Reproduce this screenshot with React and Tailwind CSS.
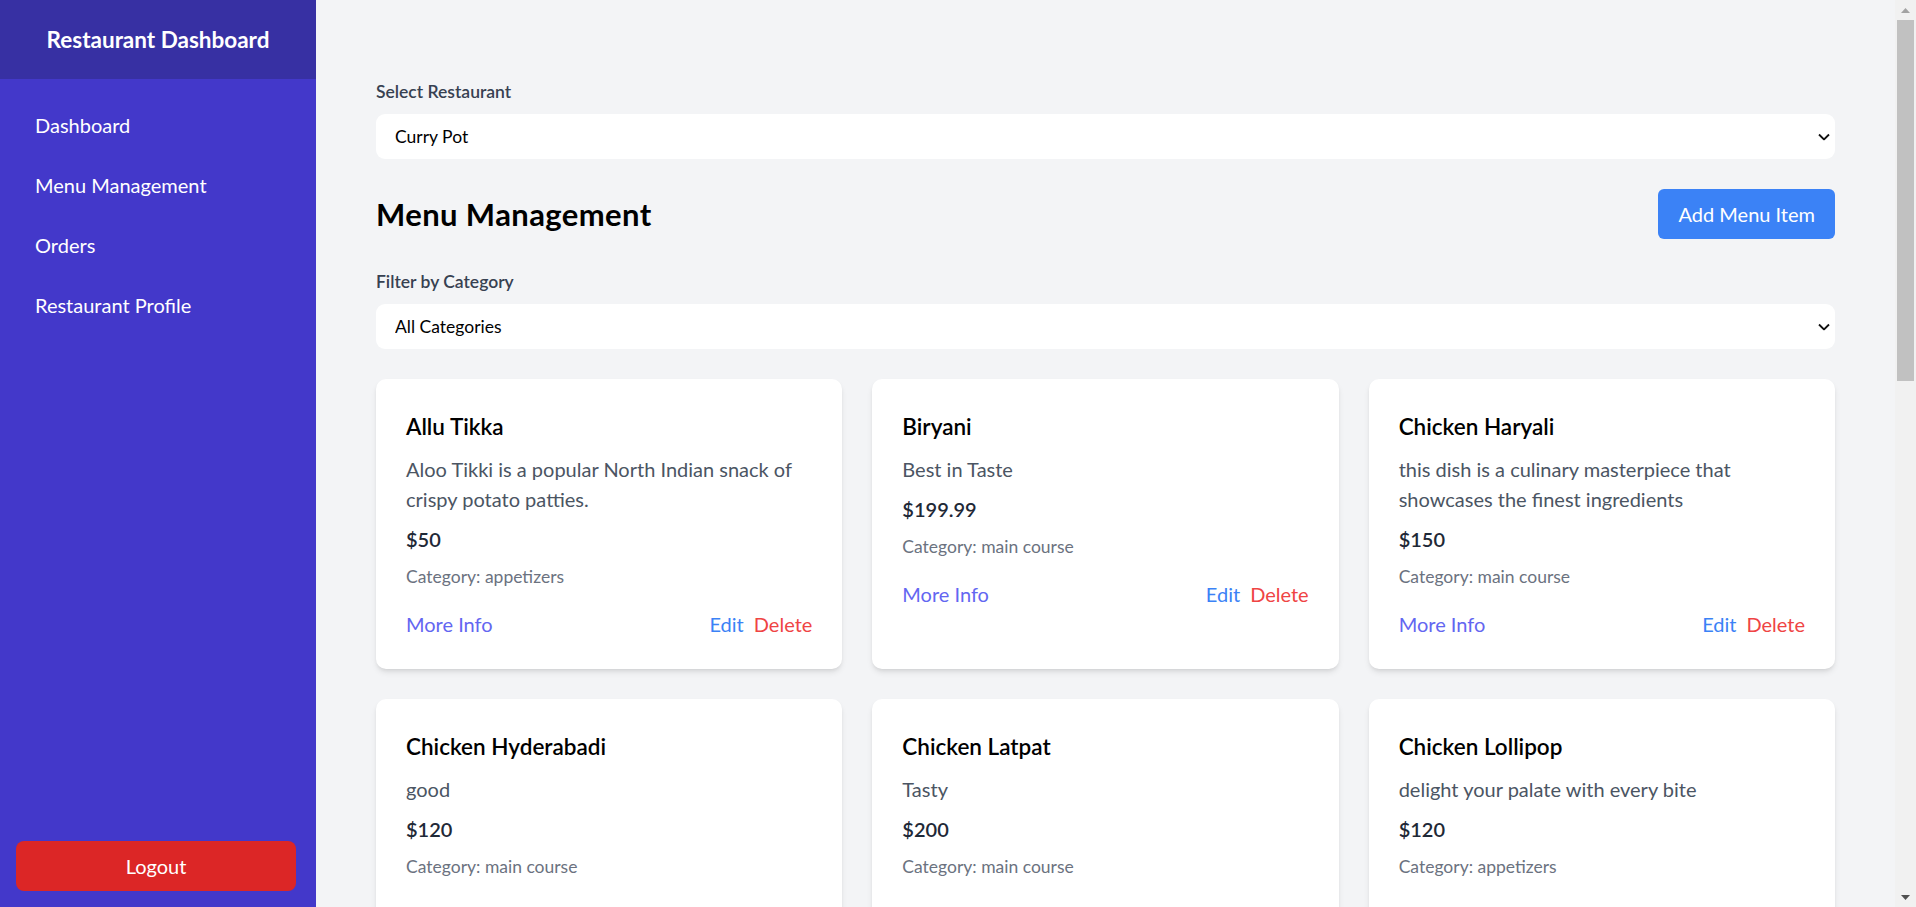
import React from "react";

const items = [
  { name: "Allu Tikka", desc: "Aloo Tikki is a popular North Indian snack of crispy potato patties.", price: "$50", cat: "appetizers" },
  { name: "Biryani", desc: "Best in Taste", price: "$199.99", cat: "main course" },
  { name: "Chicken Haryali", desc: "this dish is a culinary masterpiece that showcases the finest ingredients", price: "$150", cat: "main course" },
  { name: "Chicken Hyderabadi", desc: "good", price: "$120", cat: "main course" },
  { name: "Chicken Latpat", desc: "Tasty", price: "$200", cat: "main course" },
  { name: "Chicken Lollipop", desc: "delight your palate with every bite", price: "$120", cat: "appetizers" },
];

function Chevron() {
  return (
    <svg width="12" height="7" viewBox="0 0 12 7" className="pointer-events-none absolute right-[5px] top-1/2 -translate-y-1/2">
      <polyline points="1,1 6,6 11,1" fill="none" stroke="#111" strokeWidth="1.8" />
    </svg>
  );
}

function SelectBox({ value, options }) {
  return (
    <div className="relative">
      <select
        defaultValue={value}
        className="w-full appearance-none bg-white rounded-[9px] h-[45px] pl-[19px] pr-[30px] text-[17.5px] leading-[25px] text-black outline-none"
      >
        {options.map((o) => (
          <option key={o}>{o}</option>
        ))}
      </select>
      <Chevron />
    </div>
  );
}

function Card({ item }) {
  return (
    <div className="bg-white rounded-[10px] shadow-md p-[30px]">
      <h3 className="text-[22.5px] leading-[35px] font-semibold text-black mb-[10px]">{item.name}</h3>
      <p className="text-[20px] leading-[30px] text-[#4b5563] mb-[10px]">{item.desc}</p>
      <p className="text-[20px] leading-[30px] font-semibold text-[#1f2937] mb-[10px]">{item.price}</p>
      <p className="text-[17.5px] leading-[25px] text-[#6b7280]">Category: {item.cat}</p>
      <div className="mt-[20px] flex items-center justify-between text-[20px] leading-[30px]">
        <button className="text-[#6366f1]">More Info</button>
        <div className="flex gap-[10px]">
          <button className="text-[#3b82f6]">Edit</button>
          <button className="text-[#ef4444]">Delete</button>
        </div>
      </div>
    </div>
  );
}

function Scrollbar() {
  return (
    <div className="flex w-[21px] shrink-0 flex-col items-center bg-[#f1f1f1]">
      <div className="flex h-[20px] w-full items-center justify-center">
        <svg width="9" height="5" viewBox="0 0 9 5">
          <polygon points="0,5 4.5,0 9,5" fill="#a3a3a3" />
        </svg>
      </div>
      <div className="h-[361px] w-[17px] bg-[#c1c1c1]" />
      <div className="flex-1" />
      <div className="flex h-[20px] w-full items-center justify-center">
        <svg width="9" height="5" viewBox="0 0 9 5">
          <polygon points="0,0 9,0 4.5,5" fill="#505050" />
        </svg>
      </div>
    </div>
  );
}

export default function App() {
  const nav = ["Dashboard", "Menu Management", "Orders", "Restaurant Profile"];
  return (
    <div className="flex h-screen w-full overflow-hidden font-[Lato,sans-serif]">
      <aside className="flex w-[316px] shrink-0 flex-col bg-[#4338ca] text-white">
        <div className="flex h-[79px] items-center justify-center bg-[#3730a3]">
          <h1 className="text-[22.5px] font-bold">Restaurant Dashboard</h1>
        </div>
        <nav className="flex flex-col pt-[16px]">
          {nav.map((n) => (
            <a key={n} className="flex h-[60px] items-center pl-[35px] text-[20px]">
              {n}
            </a>
          ))}
        </nav>
        <div className="mt-auto pb-[16px] pl-[16px]">
          <button className="h-[50px] w-[280px] rounded-[8px] bg-[#dc2626] text-[20px] text-white">Logout</button>
        </div>
      </aside>
      <main className="min-w-0 flex-1 overflow-hidden bg-[#f3f4f6] px-[60px] pt-[79px]">
        <label className="mb-[10px] block text-[17.5px] leading-[25px] font-semibold text-[#374151]">Select Restaurant</label>
        <SelectBox value="Curry Pot" options={["Curry Pot", "Spice Garden", "Tandoor House"]} />
        <div className="mt-[30px] mb-[30px] flex items-center justify-between">
          <h2 className="text-[31px] leading-[40px] font-bold tracking-[0.4px] text-black">Menu Management</h2>
          <button className="h-[50px] rounded-[6px] bg-[#3b82f6] px-[20px] text-[20px] leading-[30px] text-white">Add Menu Item</button>
        </div>
        <label className="mb-[10px] block text-[17.5px] leading-[25px] font-semibold text-[#374151]">Filter by Category</label>
        <SelectBox value="All Categories" options={["All Categories", "appetizers", "main course", "desserts"]} />
        <div className="mt-[30px] grid grid-cols-3 gap-[30px]">
          {items.map((it) => (
            <Card key={it.name} item={it} />
          ))}
        </div>
      </main>
      <Scrollbar />
    </div>
  );
}
